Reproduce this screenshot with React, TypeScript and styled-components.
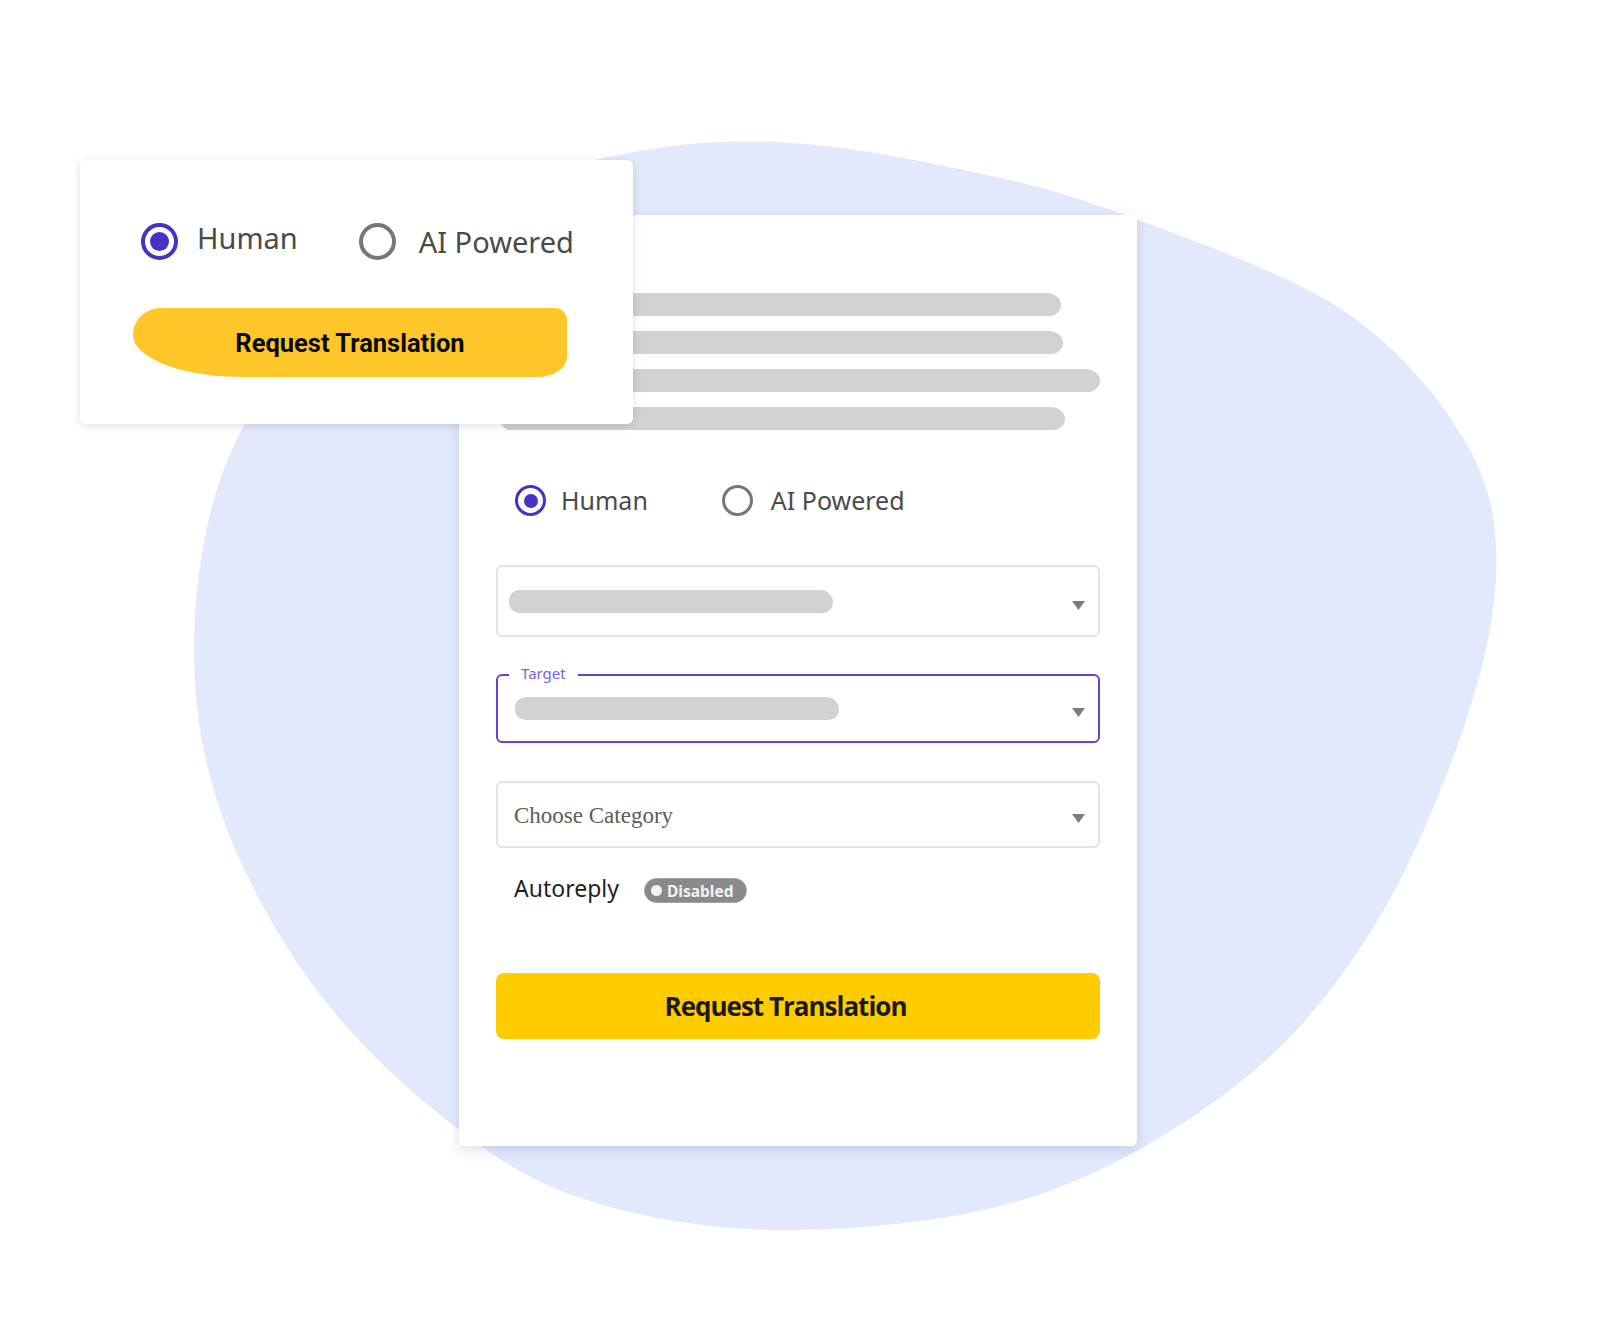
import React from "react";
import styled, { createGlobalStyle } from "styled-components";

const GlobalStyle = createGlobalStyle`
    body {
        margin: 0;
        background: #ffffff;
        font-family: "Noto Sans", "Open Sans", sans-serif;
    }
`;

const Stage = styled.div`
    position: relative;
    width: 1618px;
    height: 1317px;
    overflow: hidden;
    box-sizing: border-box;
    padding: 215px 0 0 459px;
`;

const BlobSvg = styled.svg`
    position: absolute;
    left: 0;
    top: 0;
    width: 1618px;
    height: 1317px;
`;

const MainCard = styled.div`
    position: relative;
    width: 678px;
    height: 931px;
    box-sizing: border-box;
    padding: 78px 37px 0;
    background: #ffffff;
    border-radius: 6px;
    box-shadow: 0 4px 14px rgba(50, 60, 110, 0.16);
`;

const SkeletonStack = styled.div`
    display: flex;
    flex-direction: column;
    gap: 15px;
    margin-left: 4px;
`;

const SkeletonLine = styled.div<{ $width: number }>`
    width: ${props => props.$width}px;
    height: 23px;
    background: #d2d2d2;
    border-radius: 8px 14px 12px 10px / 8px 12px 11px 12px;
`;

const RadioGroup = styled.div<{ $spacing: number; $top?: number; $inset?: number }>`
    display: flex;
    align-items: center;
    gap: ${props => props.$spacing}px;
    margin-top: ${props => props.$top || 0}px;
    padding-left: ${props => props.$inset || 0}px;
`;

const RadioOption = styled.label<{ $gap: number }>`
    display: flex;
    align-items: center;
    gap: ${props => props.$gap}px;
`;

const RadioCircle = styled.span<{ $size: number; $ring: number; $dot: number; $checked?: boolean }>`
    display: grid;
    place-items: center;
    box-sizing: border-box;
    width: ${props => props.$size}px;
    height: ${props => props.$size}px;
    border-radius: 50%;
    border: ${props => props.$ring}px solid ${props => (props.$checked ? "#4433c4" : "#777777")};
    &::after {
        content: "";
        display: ${props => (props.$checked ? "block" : "none")};
        width: ${props => props.$dot}px;
        height: ${props => props.$dot}px;
        border-radius: 50%;
        background: #4433c4;
    }
`;

const RadioLabel = styled.span<{ $size: number; $lift?: number }>`
    font-family: "Noto Sans", "Open Sans", sans-serif;
    font-size: ${props => props.$size}px;
    line-height: 1;
    color: #4a4a4a;
    margin-bottom: ${props => (props.$lift || 0) * 2}px;
`;

const SelectField = styled.div<{ $height: number; $top: number; $focused?: boolean }>`
    position: relative;
    display: flex;
    align-items: center;
    justify-content: space-between;
    box-sizing: border-box;
    height: ${props => props.$height}px;
    margin-top: ${props => props.$top}px;
    padding: 0 13px 0 11px;
    border: 2px solid ${props => (props.$focused ? "#6a3fd8" : "#e4e4e4")};
    border-radius: 6px;
`;

const FieldLabel = styled.span`
    position: absolute;
    left: 11px;
    top: -12px;
    padding: 0 12px;
    background: #ffffff;
    font-family: "Noto Sans", sans-serif;
    font-size: 15px;
    line-height: 18px;
    color: #7b5fe0;
`;

const SelectPlaceholder = styled.div<{ $width: number; $offset?: number }>`
    width: ${props => props.$width}px;
    height: 23px;
    margin-left: ${props => props.$offset || 0}px;
    background: #d2d2d2;
    border-radius: 12px 14px 12px 12px;
`;

const SelectText = styled.span`
    margin: 3px 0 0 5px;
    font-family: "Liberation Serif", serif;
    font-size: 23px;
    color: #5c5c5c;
`;

const Caret = styled.svg`
    width: 13px;
    height: 9px;
    margin-top: 8px;
`;

const AutoreplyRow = styled.div`
    display: flex;
    align-items: center;
    gap: 25px;
    margin-top: 30px;
    padding-left: 18px;
    height: 25px;
`;

const AutoreplyLabel = styled.span`
    font-family: "Noto Sans", sans-serif;
    font-size: 23px;
    line-height: 1;
    color: #1f1f1f;
    margin-bottom: 4px;
`;

const StatusBadge = styled.span`
    display: flex;
    align-items: center;
    gap: 5px;
    box-sizing: border-box;
    width: 103px;
    height: 25px;
    padding-left: 6px;
    border-radius: 13px;
    background: #8a8a8a;
    border: 1.5px solid #a3a3a3;
    font-family: "Noto Sans", sans-serif;
    font-weight: 700;
    font-size: 15.5px;
    color: #f2f2f2;
    &::before {
        content: "";
        width: 11px;
        height: 11px;
        border-radius: 50%;
        background: #f4f4f4;
    }
`;

const SubmitButton = styled.button`
    display: flex;
    align-items: center;
    justify-content: center;
    width: 604px;
    height: 66px;
    margin-top: 70px;
    padding: 0 25px 0 0;
    border: none;
    border-radius: 8px;
    background: #ffcc00;
    font-family: "Open Sans", "Noto Sans", sans-serif;
    font-weight: 700;
    font-size: 26px;
    letter-spacing: -1px;
    color: #1a1a1a;
`;

const SmallCard = styled.div`
    position: absolute;
    left: 80px;
    top: 160px;
    width: 553px;
    height: 264px;
    box-sizing: border-box;
    padding: 63px 0 0 61px;
    background: #ffffff;
    border-radius: 6px;
    box-shadow: 0 2px 10px rgba(0, 0, 0, 0.13);
`;

const BrushButton = styled.button`
    display: flex;
    align-items: center;
    justify-content: center;
    width: 434px;
    height: 69px;
    margin: 48px 0 0 -8px;
    padding: 0;
    border: none;
    background: #ffc629;
    border-radius: 28px 12px 30px 110px / 26px 12px 20px 42px;
    font-family: Roboto, sans-serif;
    font-weight: 700;
    font-size: 25.5px;
    color: #0a0a0a;
`;

const blobPoints: [number, number][] = [
    [760, 138], [950, 168], [1100, 212], [1300, 300], [1415, 420],
    [1450, 540], [1420, 700], [1330, 900], [1200, 1050], [1000, 1160],
    [760, 1192], [560, 1160], [420, 1075], [300, 950], [215, 790],
    [188, 630], [215, 460], [300, 320], [430, 205], [600, 150],
].map(([x, y]) => [x * 1.032, y * 1.032] as [number, number]);

// closed catmull-rom curve through the points
function smoothPath(pts: [number, number][]) {
    const n = pts.length;
    const f = (v: number) => v.toFixed(1);
    let d = `M${f(pts[0][0])},${f(pts[0][1])}`;
    for (let i = 0; i < n; i++) {
        const p0 = pts[(i - 1 + n) % n];
        const p1 = pts[i];
        const p2 = pts[(i + 1) % n];
        const p3 = pts[(i + 2) % n];
        const c1x = p1[0] + (p2[0] - p0[0]) / 6;
        const c1y = p1[1] + (p2[1] - p0[1]) / 6;
        const c2x = p2[0] - (p3[0] - p1[0]) / 6;
        const c2y = p2[1] - (p3[1] - p1[1]) / 6;
        d += ` C${f(c1x)},${f(c1y)} ${f(c2x)},${f(c2y)} ${f(p2[0])},${f(p2[1])}`;
    }
    return d + " Z";
}

const DropCaret = () => (
    <Caret viewBox="0 0 13 9">
        <polygon points="0,0 13,0 6.5,9" fill="#7d7d7d" />
    </Caret>
);

export default function App() {
    return (
        <>
            <GlobalStyle />
            <Stage>
                <BlobSvg viewBox="0 0 1618 1317">
                    <path d={smoothPath(blobPoints)} fill="#e3e9fd" />
                </BlobSvg>

                <MainCard>
                    <SkeletonStack>
                        <SkeletonLine $width={561} />
                        <SkeletonLine $width={563} />
                        <SkeletonLine $width={600} />
                        <SkeletonLine $width={565} />
                    </SkeletonStack>

                    <RadioGroup $spacing={74} $top={55} $inset={19}>
                        <RadioOption $gap={15}>
                            <RadioCircle $size={31} $ring={3.5} $dot={14} $checked />
                            <RadioLabel $size={25}>Human</RadioLabel>
                        </RadioOption>
                        <RadioOption $gap={18}>
                            <RadioCircle $size={31} $ring={3.5} $dot={14} />
                            <RadioLabel $size={25}>AI Powered</RadioLabel>
                        </RadioOption>
                    </RadioGroup>

                    <SelectField $height={72} $top={49}>
                        <SelectPlaceholder $width={324} />
                        <DropCaret />
                    </SelectField>

                    <SelectField $height={69} $top={37} $focused>
                        <FieldLabel>Target</FieldLabel>
                        <SelectPlaceholder $width={324} $offset={6} />
                        <DropCaret />
                    </SelectField>

                    <SelectField $height={67} $top={38}>
                        <SelectText>Choose Category</SelectText>
                        <DropCaret />
                    </SelectField>

                    <AutoreplyRow>
                        <AutoreplyLabel>Autoreply</AutoreplyLabel>
                        <StatusBadge>Disabled</StatusBadge>
                    </AutoreplyRow>

                    <SubmitButton>Request Translation</SubmitButton>
                </MainCard>

                <SmallCard>
                    <RadioGroup $spacing={61}>
                        <RadioOption $gap={19}>
                            <RadioCircle $size={37} $ring={4} $dot={19} $checked />
                            <RadioLabel $size={29} $lift={4}>Human</RadioLabel>
                        </RadioOption>
                        <RadioOption $gap={23}>
                            <RadioCircle $size={37} $ring={4} $dot={19} />
                            <RadioLabel $size={29}>AI Powered</RadioLabel>
                        </RadioOption>
                    </RadioGroup>
                    <BrushButton>Request Translation</BrushButton>
                </SmallCard>
            </Stage>
        </>
    );
}
